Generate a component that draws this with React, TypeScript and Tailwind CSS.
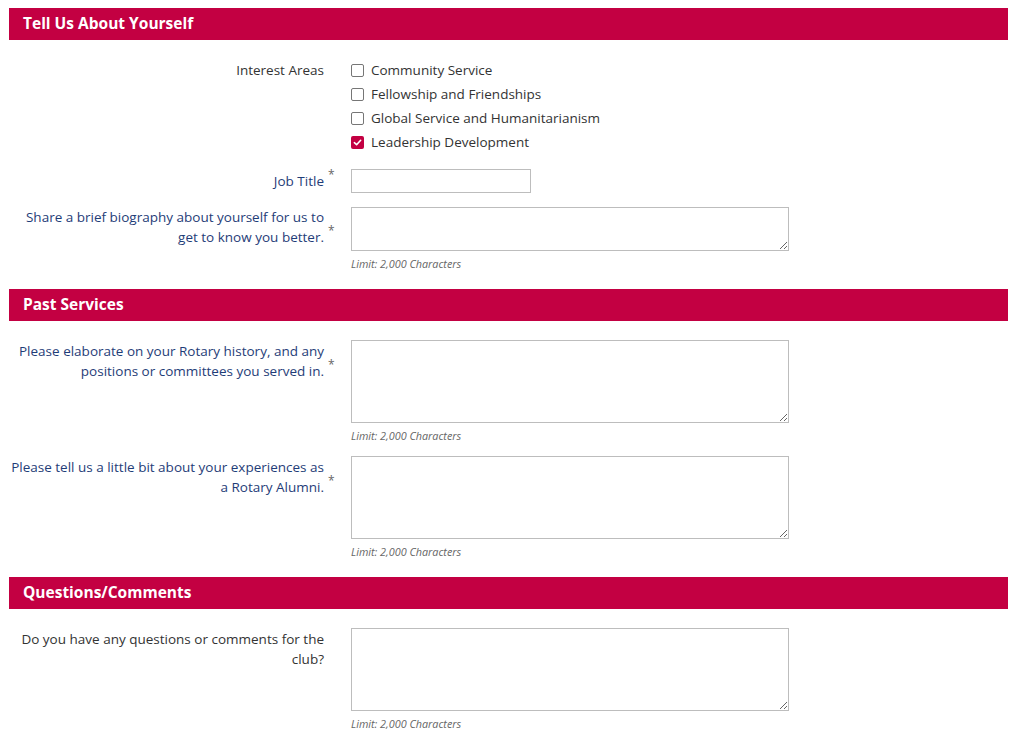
import React from 'react';

const font = { fontFamily: '"Open Sans", "Liberation Sans", sans-serif' };

const SectionHeader: React.FC<{ title: string }> = ({ title }) => (
  <div className="h-[32px] bg-[#c30042] pl-[14px] flex items-center">
    <h2 className="text-[15.5px] font-bold text-white leading-none">{title}</h2>
  </div>
);

const Label: React.FC<{ text: string; required?: boolean }> = ({ text, required }) => (
  <div className="text-right text-[13.5px] leading-[20px]">
    <span className={required ? 'text-[#1f3d78]' : 'text-[#333333]'}>{text}</span>
    {required && (
      <span className="relative">
        <span className="absolute left-[4px] top-[-7px] text-[12px] text-[#666666]">*</span>
      </span>
    )}
  </div>
);

const Limit: React.FC = () => (
  <p className="mt-[6px] text-[10.8px] italic leading-[14px] text-[#666666]">Limit: 2,000 Characters</p>
);

const TextRow: React.FC<{ label: string; required?: boolean; rows: 'sm' | 'lg' }> = ({ label, required, rows }) => (
  <div className="grid grid-cols-[315px_1fr] gap-x-[27px]">
    <div className={rows === 'lg' ? 'pt-[1px]' : ''}>
      <Label text={label} required={required} />
    </div>
    <div>
      <textarea
        className={`block w-[438px] border border-[#bdbdbd] bg-white ${rows === 'lg' ? 'h-[83px]' : 'h-[44px]'}`}
      />
      <Limit />
    </div>
  </div>
);

const Checkbox: React.FC<{ label: string; checked?: boolean }> = ({ label, checked }) => (
  <label className="flex items-center h-[24px] text-[13.5px] text-[#333333]">
    {checked ? (
      <span className="w-[13px] h-[13px] rounded-[2px] bg-[#c30042] flex items-center justify-center">
        <svg width="9" height="9" viewBox="0 0 10 10" fill="none">
          <path d="M1.5 5.2 L4 7.5 L8.5 2.5" stroke="white" strokeWidth="1.8" strokeLinecap="round" strokeLinejoin="round" />
        </svg>
      </span>
    ) : (
      <span className="w-[13px] h-[13px] rounded-[2px] border-[1.5px] border-[#767676] bg-white" />
    )}
    <span className="ml-[7px]">{label}</span>
  </label>
);

export default function App() {
  const areas = [
    { label: 'Community Service' },
    { label: 'Fellowship and Friendships' },
    { label: 'Global Service and Humanitarianism' },
    { label: 'Leadership Development', checked: true },
  ];

  return (
    <div className="bg-white min-h-[736px] pt-[8px] pl-[9px] pr-[6px]" style={font}>
      <SectionHeader title="Tell Us About Yourself" />
      <div className="pt-[18px] pb-[18px] space-y-[14px]">
        <div className="grid grid-cols-[315px_1fr] gap-x-[27px]">
          <div className="text-right text-[13.5px] leading-[24px] text-[#333333]">Interest Areas</div>
          <div className="flex flex-col">
            {areas.map((a) => (
              <Checkbox key={a.label} label={a.label} checked={a.checked} />
            ))}
          </div>
        </div>
        <div className="grid grid-cols-[315px_1fr] gap-x-[27px] pt-[1px]">
          <div className="flex items-center justify-end h-[24px]">
            <Label text="Job Title" required />
          </div>
          <input className="block w-[180px] h-[24px] border border-[#bdbdbd] bg-white" />
        </div>
        <TextRow label="Share a brief biography about yourself for us to get to know you better." required rows="sm" />
      </div>

      <SectionHeader title="Past Services" />
      <div className="pt-[19px] pb-[18px] space-y-[13px]">
        <TextRow label="Please elaborate on your Rotary history, and any positions or committees you served in." required rows="lg" />
        <TextRow label="Please tell us a little bit about your experiences as a Rotary Alumni." required rows="lg" />
      </div>

      <SectionHeader title="Questions/Comments" />
      <div className="pt-[19px] pb-[8px]">
        <TextRow label="Do you have any questions or comments for the club?" rows="lg" />
      </div>
    </div>
  );
}
